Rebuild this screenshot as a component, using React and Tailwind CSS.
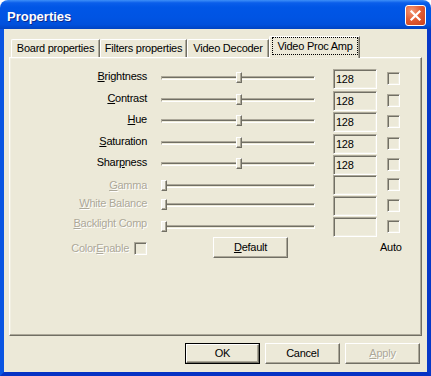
import React from "react";

// classic 3D colours on the XP olive face
const DIS = "text-[#ACA899] [text-shadow:1px_1px_0_#ffffff]";

const ROWS = [
  { pre: "", k: "B", post: "rightness", h: "h-[22px]", lt: "mt-[1px]", st: "mt-[3px]", on: true },
  { pre: "", k: "C", post: "ontrast", h: "h-[21px]", lt: "mt-[1px]", st: "mt-[3px]", on: true },
  { pre: "", k: "H", post: "ue", h: "h-[22px]", lt: "mt-[1px]", st: "mt-[3px]", on: true },
  { pre: "", k: "S", post: "aturation", h: "h-[21px]", lt: "mt-[1px]", st: "mt-[3px]", on: true },
  { pre: "Shar", k: "p", post: "ness", h: "h-[20px]", lt: "mt-[1px]", st: "mt-[3px]", on: true },
  { pre: "", k: "G", post: "amma", h: "h-[21px]", lt: "mt-[4px]", st: "mt-[5px]", on: false },
  { pre: "", k: "W", post: "hite Balance", h: "h-[21px]", lt: "mt-[1px]", st: "mt-[3px]", on: false },
  { pre: "", k: "B", post: "acklight Comp", h: "h-[20px]", lt: "mt-[0px]", st: "mt-[4px]", on: false },
];

function Sunken({ className, children }) {
  return (
    <div
      className={
        "border border-t-[#ACA899] border-l-[#ACA899] border-r-white border-b-white bg-[#ECE9D8] shadow-[inset_1px_1px_0_#716F64,inset_-1px_-1px_0_#F1EFE2] " +
        className
      }
    >
      {children}
    </div>
  );
}

function Slider({ className, on }) {
  return (
    <div className={"relative flex h-[11px] w-[154px] items-center " + className}>
      <div className="h-[4px] w-full border border-t-[#ACA899] border-l-[#ACA899] border-r-white border-b-white shadow-[inset_0_1px_0_#716F64]" />
      <div
        className={
          "absolute top-0 h-[11px] w-[6px] border border-t-white border-l-white border-r-[#716F64] border-b-[#716F64] shadow-[inset_-1px_-1px_0_#ACA899] " +
          (on ? "left-[75px] bg-[#ECE9D8]" : "left-0 bg-[#F4F3EC]")
        }
      />
    </div>
  );
}

function Button({ children, def, disabled, className = "" }) {
  return (
    <div className={"h-[21px] w-[75px] " + (def ? "border border-black " : "") + className}>
      <div className="flex h-full w-full items-center justify-center border border-t-white border-l-white border-r-[#716F64] border-b-[#716F64] bg-[#ECE9D8] shadow-[inset_-1px_-1px_0_#ACA899]">
        <span className={disabled ? DIS : ""}>{children}</span>
      </div>
    </div>
  );
}

function Tab({ label, w }) {
  return (
    <div
      className={
        "mt-[3px] flex h-[18px] items-center justify-center rounded-tl-[2px] border-t border-l border-r border-t-white border-l-white border-r-[#716F64] shadow-[inset_-1px_0_0_#ACA899] " +
        w
      }
    >
      {label}
    </div>
  );
}

export default function App() {
  return (
    <div className="h-[376px] w-[431px] bg-white font-['Liberation_Sans',Arial,sans-serif] text-[11px] leading-[13px] tracking-[-0.25px] text-black">
      <div className="flex h-full flex-col overflow-hidden rounded-t-[8px]">
        {/* Title bar */}
        <div className="flex h-[29px] shrink-0 items-start bg-[linear-gradient(to_bottom,#3D8FF8_0%,#0A5EEA_10%,#0056E6_25%,#0054E3_60%,#0050DC_85%,#0043C2_100%)] pl-[7px]">
          <span className="mt-[9px] text-[13px] font-bold leading-[15px] tracking-normal text-white [text-shadow:1px_1px_0_#0A2A90]">
            Properties
          </span>
          <div className="ml-auto mr-[5px] mt-[5px] flex h-[21px] w-[21px] items-center justify-center rounded-[3px] border border-white bg-[radial-gradient(circle_at_30%_25%,#F39A78_0%,#E35E35_45%,#C8401C_100%)]">
            <svg width="13" height="13" viewBox="0 0 13 13">
              <path d="M2.5 2.5 L10.5 10.5 M10.5 2.5 L2.5 10.5" stroke="white" strokeWidth="2.2" strokeLinecap="square" />
            </svg>
          </div>
        </div>

        {/* Client */}
        <div className="flex flex-1 flex-col border-b-4 border-l-4 border-r-4 border-b-[#0632C4] border-l-[#0A55E2] border-r-[#0738C8] bg-[#ECE9D8]">
          {/* Tabs */}
          <div className="flex items-end pl-[7px] pt-[7px]">
            <Tab label="Board properties" w="w-[89px]" />
            <Tab label="Filters properties" w="w-[87px]" />
            <Tab label="Video Decoder" w="w-[82px]" />
            <div className="relative z-10 -mb-[1px] flex h-[22px] w-[91px] rounded-tl-[2px] border-t border-l border-r border-t-white border-l-white border-r-[#716F64] bg-[#ECE9D8] shadow-[inset_-1px_0_0_#ACA899]">
              <div className="mb-[3px] ml-[2px] mr-[1px] mt-0 flex flex-1 items-center justify-center border border-dotted border-black">
                Video Proc Amp
              </div>
            </div>
          </div>

          {/* Panel */}
          <div className="ml-[5px] h-[279px] w-[413px] border border-t-white border-l-white border-r-[#716F64] border-b-[#716F64] pt-[11px] shadow-[inset_-1px_-1px_0_#ACA899,inset_1px_1px_0_#F1EFE2]">
            {ROWS.map((r, i) => (
              <div key={i} className={"flex items-start " + r.h}>
                <div className={"w-[137px] text-right " + r.lt + " " + (r.on ? "" : DIS)}>
                  {r.pre}
                  <u>{r.k}</u>
                  {r.post}
                </div>
                <Slider className={"ml-[14px] " + r.st} on={r.on} />
                <Sunken className="ml-[18px] flex h-[20px] w-[44px] items-center pl-[2px]">
                  {r.on ? "128" : ""}
                </Sunken>
                <Sunken className="ml-[10px] mt-[3px] h-[13px] w-[13px]" />
              </div>
            ))}
            <div className="flex items-start">
              <div className="flex w-[137px] items-start justify-end">
                <span className={"mt-[5px] " + DIS}>
                  Color<u>E</u>nable
                </span>
                <Sunken className="ml-[5px] mt-[5px] h-[13px] w-[13px]" />
              </div>
              <Button className="ml-[66px]">
                <u>D</u>efault
              </Button>
              <span className="ml-[92px] mt-[4px]">Auto</span>
            </div>
          </div>

          {/* Dialog buttons */}
          <div className="mt-[7px] flex justify-end gap-[5px] pr-[7px]">
            <Button def>OK</Button>
            <Button>Cancel</Button>
            <Button disabled>
              <u>A</u>pply
            </Button>
          </div>
        </div>
      </div>
    </div>
  );
}
